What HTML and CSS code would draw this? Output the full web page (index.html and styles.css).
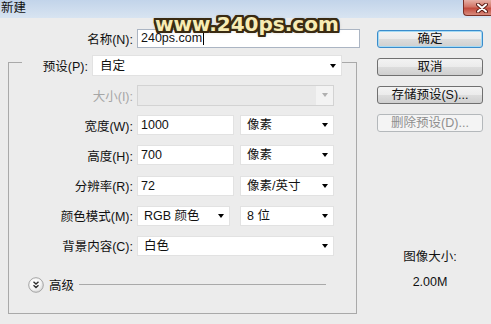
FILE: index.html
```html
<!DOCTYPE html>
<html>
<head>
    <meta charset="utf-8">
    <title>新建</title>
    <link rel="stylesheet" href="styles.css">
</head>
<body>
    <div class="titlebar">
        <span class="title">新建</span>
        <div class="close">
            <svg width="12" height="10" viewBox="0 0 12 10">
                <path d="M2 1.5 L10 8.5 M10 1.5 L2 8.5" stroke="#5a1d16" stroke-width="4" stroke-linecap="round"/>
                <path d="M2 1.5 L10 8.5 M10 1.5 L2 8.5" stroke="#fff" stroke-width="2" stroke-linecap="round"/>
            </svg>
        </div>
    </div>

    <div class="dialog">
        <div class="main">
            <div class="name-row">
                <span class="label">名称(N):</span>
                <div class="field input name-input">240ps.com<span class="caret"></span></div>
            </div>

            <fieldset class="group">
                <legend class="preset-legend">
                    <div class="preset">
                        <span class="label">预设(P):</span>
                        <div class="field select preset-select">自定<span class="arrow"></span></div>
                    </div>
                </legend>

                <div class="rows">
                    <div class="row">
                        <span class="label disabled">大小(I):</span>
                        <div class="field select wide disabled-select"><span class="arrow"></span></div>
                    </div>
                    <div class="row">
                        <span class="label">宽度(W):</span>
                        <div class="pair">
                            <div class="field input value">1000</div>
                            <div class="field select unit">像素<span class="arrow"></span></div>
                        </div>
                    </div>
                    <div class="row">
                        <span class="label">高度(H):</span>
                        <div class="pair">
                            <div class="field input value">700</div>
                            <div class="field select unit">像素<span class="arrow"></span></div>
                        </div>
                    </div>
                    <div class="row">
                        <span class="label">分辨率(R):</span>
                        <div class="pair">
                            <div class="field input value">72</div>
                            <div class="field select unit">像素/英寸<span class="arrow"></span></div>
                        </div>
                    </div>
                    <div class="row">
                        <span class="label">颜色模式(M):</span>
                        <div class="pair">
                            <div class="field select mode">RGB 颜色<span class="arrow"></span></div>
                            <div class="field select unit">8 位<span class="arrow"></span></div>
                        </div>
                    </div>
                    <div class="row">
                        <span class="label">背景内容(C):</span>
                        <div class="field select wide">白色<span class="arrow"></span></div>
                    </div>
                </div>

                <div class="advanced">
                    <svg class="expand" width="16" height="16" viewBox="0 0 16 16">
                        <defs>
                            <radialGradient id="knobFill" cx="0.4" cy="0.35" r="0.7">
                                <stop offset="0" stop-color="#ffffff"/>
                                <stop offset="0.6" stop-color="#f4f4f4"/>
                                <stop offset="1" stop-color="#d4d4d4"/>
                            </radialGradient>
                        </defs>
                        <circle cx="8" cy="8" r="7.3" fill="url(#knobFill)" stroke="#a5a5a5" stroke-width="1"/>
                        <path d="M5.5 4.8 L8 7 L10.5 4.8 M5.5 8.3 L8 10.5 L10.5 8.3" fill="none" stroke="#2b2b2b" stroke-width="1.4"/>
                    </svg>
                    <span class="advanced-text">高级</span>
                    <div class="rule"></div>
                </div>
            </fieldset>
        </div>

        <div class="side">
            <div class="btn btn-default">确定</div>
            <div class="btn">取消</div>
            <div class="btn">存储预设(S)...</div>
            <div class="btn btn-disabled">删除预设(D)...</div>
            <div class="info">
                <div>图像大小:</div>
                <div>2.00M</div>
            </div>
        </div>
    </div>

    <div class="watermark">www.240ps.com</div>
</body>
</html>
```

FILE: styles.css
```css
html, body {
    height: 100%;
    margin: 0;
}
body {
    position: relative;
    background-color: #ececec;
    font-family: "Liberation Sans", "Noto Sans CJK SC", sans-serif;
    font-size: 12.5px;
    color: #111;
    overflow: hidden;
}

/* タイトルバー */
.titlebar {
    height: 18px;
    display: flex;
    justify-content: space-between;
    background: linear-gradient(to bottom, #c2d4ea, #d8e4f1);
}
.title {
    line-height: 16px;
    padding-left: 1px;
}
.close {
    width: 28px;
    height: 16px;
    box-sizing: border-box;
    display: flex;
    align-items: center;
    padding-left: 12px;
    border: 1px solid #7a3027;
    border-top: none;
    border-right: none;
    border-radius: 0 0 0 4px;
    background: linear-gradient(to bottom, #e6b0a6 0%, #d27567 45%, #c24b3d 55%, #d88b7d 100%);
}

.dialog {
    display: flex;
}
.main {
    width: 360px;
    padding-top: 11px;
}
.label {
    flex: none;
    text-align: right;
    white-space: nowrap;
}
.disabled {
    color: #a6a6a6;
}

/* 入力欄 */
.field {
    box-sizing: border-box;
    height: 20px;
    line-height: 18px;
    background-color: #fff;
    border: 1px solid #e2e2e2;
    white-space: nowrap;
}
.input {
    padding-left: 3px;
}
.select {
    display: flex;
    justify-content: space-between;
    align-items: center;
    padding: 0 5px 0 6px;
}
.arrow {
    width: 0;
    height: 0;
    border-left: 3.5px solid transparent;
    border-right: 3.5px solid transparent;
    border-top: 4px solid #000;
}

.name-row {
    display: flex;
    align-items: center;
    gap: 4px;
}
.name-row .label {
    width: 133px;
}
.name-input {
    width: 223px;
    height: 19px;
    line-height: 17px;
    border-color: #abb5c3;
}
.caret {
    display: inline-block;
    width: 1px;
    height: 14px;
    margin-left: 1px;
    vertical-align: -3px;
    background-color: #000;
}

/* グループ枠 */
.group {
    margin: 0 0 0 8px;
    width: 349px;
    min-width: 0;
    box-sizing: border-box;
    padding: 9px 0 20px;
    border: 1px solid #a9a9a9;
}
.preset-legend {
    margin-left: 13px;
    padding: 7px 0 0;
}
.preset {
    display: flex;
    align-items: center;
    gap: 4px;
}
.preset .label {
    width: 66px;
}
.preset-select {
    width: 250px;
    height: 21px;
    padding-left: 7px;
}

.rows {
    display: flex;
    flex-direction: column;
    gap: 10.2px;
}
.row {
    display: flex;
    align-items: center;
    gap: 4px;
    height: 20px;
}
.row .label {
    width: 124px;
}
.wide {
    width: 197px;
}
.disabled-select {
    height: 21px;
    background: linear-gradient(to right, #e9e9e9 0, #e9e9e9 178px, #f3f3f3 178px);
    border-color: #d3d3d3;
    justify-content: flex-end;
}
.disabled-select .arrow {
    border-top-color: #b0b0b0;
}
.pair {
    width: 197px;
    display: flex;
    justify-content: space-between;
}
.value {
    width: 97px;
}
.unit {
    width: 94px;
}
.mode {
    width: 93px;
}

.advanced {
    display: flex;
    align-items: center;
    height: 16px;
    margin-top: 21px;
    padding: 0 30px 0 19px;
}
.expand {
    flex: none;
}
.advanced-text {
    margin-left: 5px;
}
.rule {
    flex: 1;
    margin-left: 5px;
    border-top: 1px solid #a9a9a9;
}

/* 右側のボタン */
.side {
    width: 106px;
    margin-left: 17px;
    padding-top: 12px;
    display: flex;
    flex-direction: column;
    gap: 10px;
}
.btn {
    height: 18px;
    box-sizing: border-box;
    border: 1px solid #707070;
    border-radius: 3px;
    background: linear-gradient(to bottom, #f3f3f3 0%, #ebebeb 50%, #dddddd 50%, #cfcfcf 100%);
    text-align: center;
    line-height: 16px;
}
.btn-default {
    border-color: #3a8ccc;
    box-shadow: inset 0 0 0 1px #a4daf4;
}
.btn-disabled {
    border-color: #b4b8bb;
    background: #f4f4f4;
    color: #8e8e8e;
}
.info {
    margin-top: 103px;
    text-align: center;
    line-height: 25px;
}

/* 透かし */
.watermark {
    position: absolute;
    left: 155px;
    top: 14px;
    font-family: "DejaVu Sans", sans-serif;
    font-weight: bold;
    font-size: 20px;
    line-height: 20px;
    color: #f7ecb4;
    text-shadow:
        -2px -2px 0 #3a2b12, 0 -2px 0 #3a2b12, 2px -2px 0 #3a2b12,
        -2px 0 0 #3a2b12, 2px 0 0 #3a2b12,
        -2px 2px 0 #3a2b12, 0 2px 0 #3a2b12, 2px 2px 0 #3a2b12,
        -1px -2px 0 #3a2b12, 1px -2px 0 #3a2b12, -1px 2px 0 #3a2b12, 1px 2px 0 #3a2b12,
        -2px -1px 0 #3a2b12, 2px -1px 0 #3a2b12, -2px 1px 0 #3a2b12, 2px 1px 0 #3a2b12,
        0 0 4px rgba(40, 30, 10, 0.6);
}
```
